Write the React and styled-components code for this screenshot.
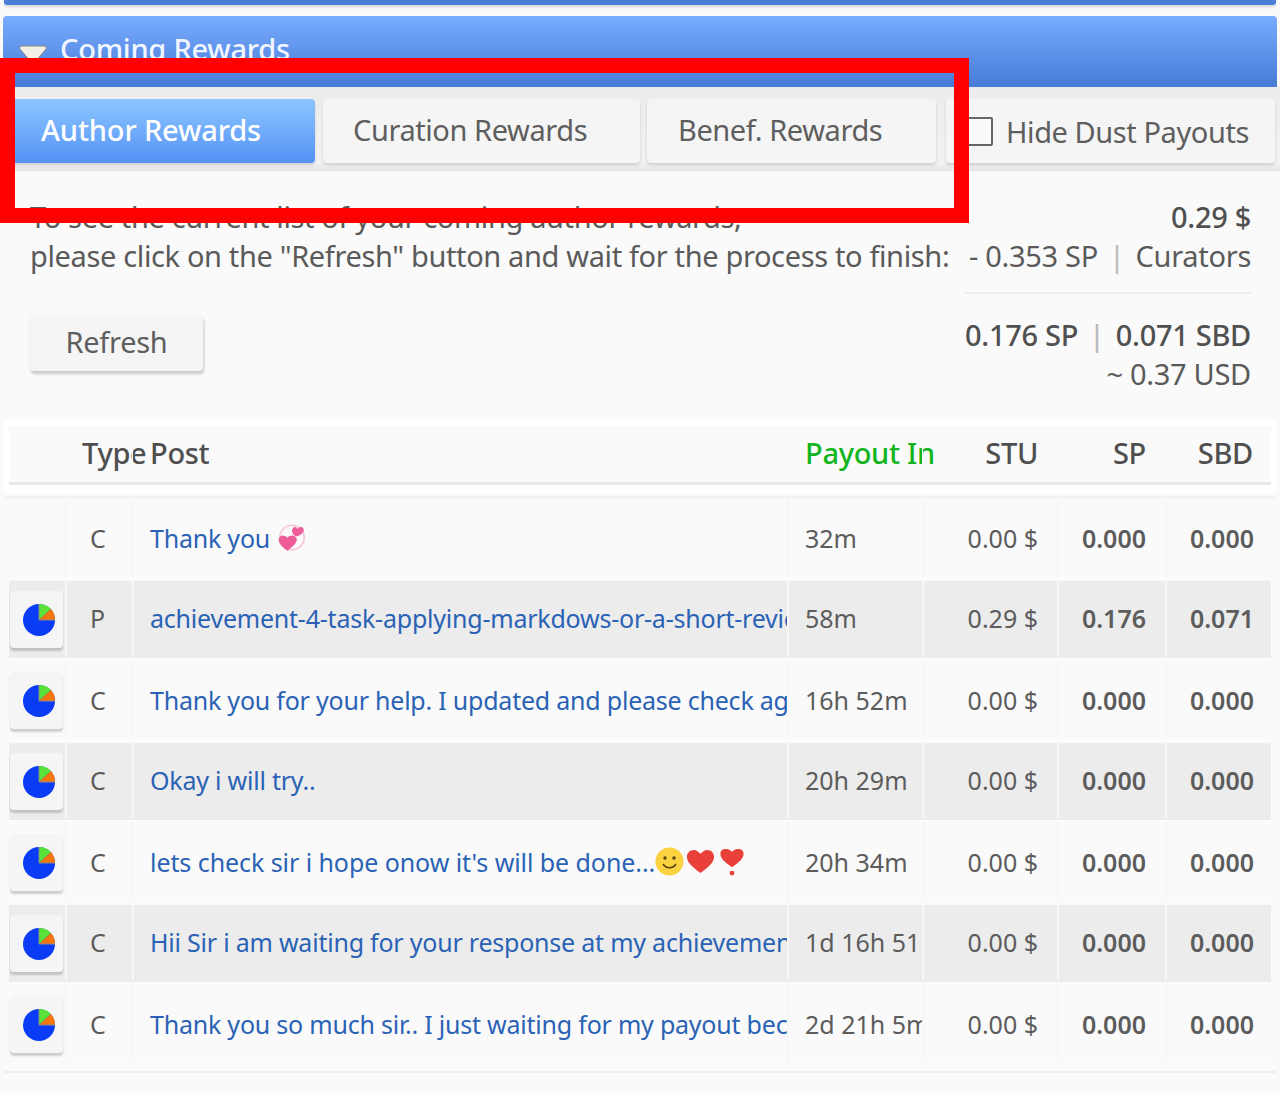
import React from "react";
import styled, { createGlobalStyle } from "styled-components";

const Global = createGlobalStyle`
  html, body { margin: 0; padding: 0; background: #fafafa; }
  body { font-family: "Noto Sans", "Open Sans", sans-serif; color: #555; overflow: hidden; }
`;
const Page = styled.div`position: relative; width: 1280px; height: 1095px; overflow: hidden; background: #fafafa;`;
const TopBar = styled.div`height: 5px; margin: 0 4px; background: #4a7fd8; border-radius: 0 0 3px 3px; box-shadow: 0 2px 3px rgba(0,0,0,.15);`;
const Panel = styled.div`margin: 11px 3px 0 3px; height: 71px; border-radius: 4px 4px 0 0; background: linear-gradient(#78acff, #477bd6); display: flex; align-items: flex-start; gap: 12px; padding: 15px 0 0 15px; box-sizing: border-box; color: #fff;`;
const PanelTitle = styled.div`font-size: 29px; line-height: 36px; letter-spacing: -.25px; color: #f2f6ff; font-weight: 500;`;
const Arrow = styled.svg`width: 30px; height: 24px; margin-top: 12px;`;
const TabBand = styled.div`height: 85px; display: flex; align-items: flex-start; padding: 12px 4px 0 2px; box-sizing: border-box; background: linear-gradient(#ececec 0, #f2f2f2 76px, #e6e6e6 83px, #fafafa 85px);`;
const Tab = styled.div`
  height: 64px; width: ${p => p.$w}px; margin-left: ${p => p.$ml || 0}px; box-sizing: border-box; border-radius: 4px; display: flex; align-items: center;
  padding-left: ${p => p.$pad}px; padding-bottom: 3px; font-size: 29px; white-space: nowrap;
  letter-spacing: ${p => p.$active ? "-.15px" : "-.42px"};
  color: ${p => p.$active ? "#fff" : "#5e5e5e"};
  font-weight: ${p => p.$active ? 500 : 400};
  background: ${p => p.$active ? "linear-gradient(#8cc6ff, #5492f5)" : "#f5f5f5"};
  box-shadow: 0 2px 3px rgba(0,0,0,.14);
`;
const Check = styled.span`width: 22px; height: 25px; border: 2px solid #666; border-radius: 2px; margin-right: 13px; margin-top: 3px; flex: none; background: #fafafa;`;
const HideLabel = styled.span`margin-top: 3px;`;
const Summary = styled.div`display: flex; justify-content: space-between; padding: 25px 29px 0 30px; height: 247px; box-sizing: border-box;`;
const Intro = styled.div`font-size: 29px; line-height: 39px; letter-spacing: -.36px; color: #5a5a5a; white-space: nowrap;`;
const Refresh = styled.div`
  margin-top: 40px; width: 173px; height: 56px; padding-bottom: 3px; border-radius: 4px; background: #f5f5f5; display: flex; align-items: center; justify-content: center; box-sizing: border-box;
  box-shadow: 1px 3px 3px rgba(0,0,0,.2); font-size: 29px; letter-spacing: -.3px; color: #5e5e5e;
`;
const Totals = styled.div`display: flex; flex-direction: column; align-items: flex-end; font-size: 29px; line-height: 39px; letter-spacing: -.3px; color: #5a5a5a; white-space: nowrap; width: 286px;`;
const Strong = styled.div`font-weight: 500; color: #505050;`;
const Divider = styled.div`align-self: stretch; height: 2px; background: #efefef; margin: 17px 0 21px;`;
const Bar = styled.span`color: #bbb; margin: 0 11px;`;
const HeadWrap = styled.div`margin: 1px 4px 0; background: #fff; padding: 6px 5px 9px; border-radius: 3px;`;
const grid = "56px 67px 655px 135px 135px 108px 107px";
const HeadRow = styled.div`display: grid; grid-template-columns: ${grid}; height: 56px; background: #fafafa; border-bottom: 3px solid #e8e8e8; box-sizing: content-box;`;
const HeadCell = styled.div`
  display: flex; align-items: center; box-sizing: border-box; font-size: 29px; letter-spacing: -.3px; font-weight: 500; white-space: nowrap;
  justify-content: ${p => p.$right ? "flex-end" : "flex-start"};
  padding: ${p => p.$right ? `0 ${p.$pr}px 3px 0` : `0 0 3px ${p.$pl}px`};
  color: ${p => p.$green ? "#12b51e" : "#4f4f4f"};
  border-left: ${p => p.$first ? "none" : "1px solid #f6f6f6"};
`;
const Body = styled.div`margin: 2px 4px 0 4px; padding: 0 5px 6px; border-top: 2px solid #f2f2f2; border-bottom: 2px solid #eeeeee; display: flex; flex-direction: column;`;
const Row = styled.div`
  display: grid; grid-template-columns: ${grid}; height: 81px; box-sizing: border-box; border-bottom: 2px solid #fcfcfc;
  padding-bottom: ${p => p.$alt ? 2 : 0}px;
  background: ${p => p.$alt ? "linear-gradient(#fafafa 2px, #ececec 2px)" : "#fafafa"};
`;
const Cell = styled.div`
  display: flex; align-items: center; overflow: hidden; white-space: nowrap; font-size: 25px; color: #5c5c5c;
  justify-content: ${p => p.$right ? "flex-end" : "flex-start"};
  padding: ${p => p.$right ? `0 ${p.$pr}px 0 0` : `0 0 0 ${p.$pl}px`};
  border-left: ${p => p.$first ? "none" : "2px solid #f7f7f7"};
  font-weight: ${p => p.$bold ? 600 : 400};
`;
const PostLink = styled.a`color: #2a62b5; text-decoration: none; display: inline-flex; align-items: center; letter-spacing: ${p => p.$loose ? "-.07px" : "-.22px"};`;
const PieButton = styled.div`width: 53px; height: 57px; margin: ${p => p.$alt ? 4 : 2}px 0 0 1px; padding-left: 4px; box-sizing: border-box; background: #f5f5f5; border-radius: 4px; box-shadow: 0 3px 2px rgba(0,0,0,.18); display: flex; align-items: center; justify-content: center;`;
const Marker = styled.div`
  position: absolute; left: 0; top: 58px; width: 969px; height: 165px; box-sizing: border-box; border: 15px solid #fe0000; pointer-events: none;
`;

const Pie = () => (
  <svg width="34" height="34" viewBox="0 0 34 34">
    <circle cx="17" cy="17" r="16" fill="#0a3cf5" />
    <path d="M17 17V1A16 16 0 0 1 29 6Z" fill="#5be23a" />
    <path d="M17 17L29 6A16 16 0 0 1 33 17Z" fill="#f5750f" />
    <path d="M17 1V17H33" fill="none" stroke="#8a8a8a" strokeWidth="1" />
  </svg>
);
const Hearts = () => (
  <svg width="30" height="29" viewBox="0 0 32 30" style={{ marginLeft: 7 }}>
    <circle cx="16" cy="15" r="13" fill="none" stroke="#f8c9dc" strokeWidth="2" />
    <path d="M20 14c-4-3-5-7-3-9 2-2 4-1 5 1 1-2 4-3 6-1 2 3-1 7-8 9z" fill="#ee5c98" />
    <path d="M11 29C4 24 1 20 2 16c1-4 6-4 9-1 3-3 8-3 10 1 1 4-3 8-10 13z" fill="#ee5c98" />
  </svg>
);
const Heart = () => (
  <svg width="29" height="27" viewBox="0 0 30 26"><path d="M15 25C6 18 1 14 1 8c0-4 3-7 7-7 3 0 5 2 7 4 2-2 4-4 7-4 4 0 7 3 7 7 0 6-5 10-14 17z" fill="#e9403a" /></svg>
);
const Exclaim = () => (
  <svg width="26" height="28" viewBox="0 0 26 29" style={{ marginLeft: 4 }}>
    <path d="M13 20C5 14 1 11 1 6c0-3 2-5 6-5 3 0 5 2 6 3 1-1 3-3 6-3 4 0 6 2 6 5 0 5-4 8-12 14z" fill="#e9403a" />
    <circle cx="13" cy="26" r="2.5" fill="#e9403a" />
  </svg>
);
const Smile = () => (
  <svg width="29" height="29" viewBox="0 0 29 29" style={{ marginRight: 2 }}>
    <circle cx="14.5" cy="14.5" r="14" fill="#fbd23f" />
    <circle cx="10" cy="11" r="1.7" fill="#5a4010" /><circle cx="19" cy="11" r="1.7" fill="#5a4010" />
    <path d="M8 17c3 5 10 5 13 0" fill="none" stroke="#5a4010" strokeWidth="1.5" />
  </svg>
);

const rows = [
  { type: "C", post: <>Thank you <Hearts /></>, pay: "32m", stu: "0.00 $", sp: "0.000", sbd: "0.000", pie: false },
  { type: "P", post: "achievement-4-task-applying-markdows-or-a-short-review-of-the-task", pay: "58m", stu: "0.29 $", sp: "0.176", sbd: "0.071", pie: true },
  { type: "C", post: "Thank you for your help. I updated and please check again sir", pay: "16h 52m", stu: "0.00 $", sp: "0.000", sbd: "0.000", pie: true },
  { type: "C", post: "Okay i will try..", pay: "20h 29m", stu: "0.00 $", sp: "0.000", sbd: "0.000", pie: true },
  { type: "C", loose: true, post: <>lets check sir i hope onow it's will be done...<Smile /><Heart /><Exclaim /></>, pay: "20h 34m", stu: "0.00 $", sp: "0.000", sbd: "0.000", pie: true },
  { type: "C", post: "Hii Sir i am waiting for your response at my achievement task", pay: "1d 16h 51m", stu: "0.00 $", sp: "0.000", sbd: "0.000", pie: true },
  { type: "C", post: "Thank you so much sir.. I just waiting for my payout because", pay: "2d 21h 5m", stu: "0.00 $", sp: "0.000", sbd: "0.000", pie: true },
];

export default function App() {
  return (
    <Page>
      <Global />
      <TopBar />
      <Panel>
        <Arrow viewBox="0 0 30 24"><path d="M4 3h22c2 0 3 2 2 3L17 19c-1 1-3 1-4 0L2 6C1 5 2 3 4 3Z" fill="#f3efe6" stroke="#888" strokeWidth="1" /></Arrow>
        <PanelTitle>Coming Rewards</PanelTitle>
      </Panel>
      <TabBand>
        <Tab $active $w={313} $pad={39}>Author Rewards</Tab>
        <Tab $ml={8} $w={317} $pad={30}>Curation Rewards</Tab>
        <Tab $ml={7} $w={289} $pad={31}>Benef. Rewards</Tab>
        <Tab $ml={10} $w={329} $pad={21}><Check /><HideLabel>Hide Dust Payouts</HideLabel></Tab>
      </TabBand>
      <Summary>
        <div>
          <Intro>To see the current list of your coming author rewards,<br />please click on the "Refresh" button and wait for the process to finish:</Intro>
          <Refresh>Refresh</Refresh>
        </div>
        <Totals>
          <Strong>0.29 $</Strong>
          <div>- 0.353 SP<Bar>|</Bar>Curators</div>
          <Divider />
          <Strong>0.176 SP<Bar>|</Bar>0.071 SBD</Strong>
          <div>~ 0.37 USD</div>
        </Totals>
      </Summary>
      <HeadWrap>
        <HeadRow>
          <HeadCell $first />
          <HeadCell $pl={16}>Type</HeadCell>
          <HeadCell $pl={17}>Post</HeadCell>
          <HeadCell $pl={17} $green>Payout In</HeadCell>
          <HeadCell $right $pr={19}>STU</HeadCell>
          <HeadCell $right $pr={19}>SP</HeadCell>
          <HeadCell $right $pr={19}>SBD</HeadCell>
        </HeadRow>
      </HeadWrap>
      <Body>
        {rows.map((r, i) => {
          const alt = i % 2 === 1;
          return (
            <Row key={i} $alt={alt}>
              <Cell $first>{r.pie && <PieButton $alt={alt}><Pie /></PieButton>}</Cell>
              <Cell $pl={23}>{r.type}</Cell>
              <Cell $pl={16}><PostLink $loose={r.loose}>{r.post}</PostLink></Cell>
              <Cell $pl={16}>{r.pay}</Cell>
              <Cell $right $pr={19}>{r.stu}</Cell>
              <Cell $right $bold $pr={19}>{r.sp}</Cell>
              <Cell $right $bold $pr={18}>{r.sbd}</Cell>
            </Row>
          );
        })}
      </Body>
      <Marker />
    </Page>
  );
}
